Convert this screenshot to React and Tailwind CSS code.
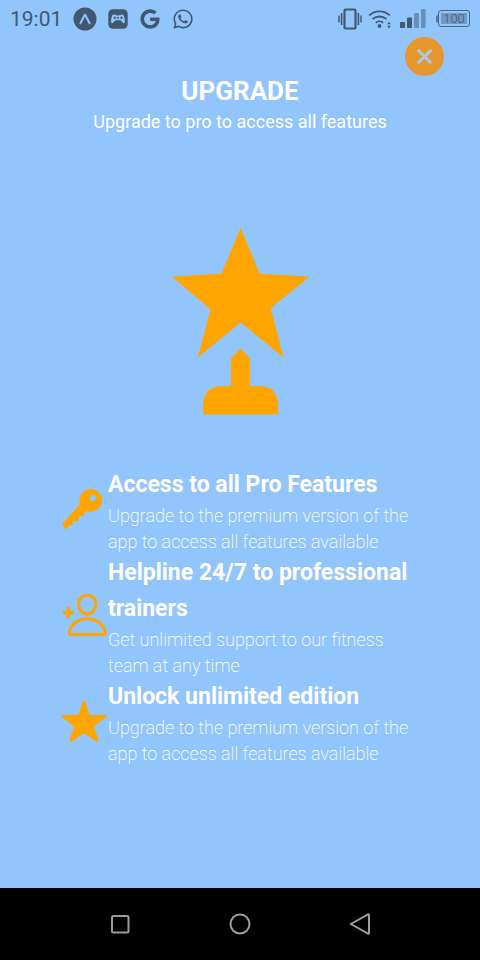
import { FaGoogle, FaWhatsapp } from "react-icons/fa";

function KeyIcon({ className }) {
  return (
    <svg viewBox="0 0 48 48" className={className} fill="currentColor" aria-hidden="true">
      <path
        fillRule="evenodd"
        d="M30.700 3a11.400 11.400 0 1 1-3.500 22.300q-1.800-.3-2.700 1.100c.2 2.600-1.200 4-3.200 3.500-1.600-.3-2.300.3-2.500 1.300.5 2.800-1.200 4.600-3.400 4.100-1.300-.4-1.900-1-2.400-.4-.6.900.3 1.800-.3 3-.6 1.500-2.100 1.900-3.400 1.700-1 .1-1 1.500-1.900 2.300-1.200 1.200-2.400 1.100-3.500.2L3.300 39.800q-1.300-1.300-.2-2.700L19.200 19q.8-1 .5-2.600A11.300 11.300 0 0 1 30.700 3zM33 9a3.100 3.100 0 1 0 .01 0z"
      />
    </svg>
  );
}

function PersonAddIcon({ className }) {
  return (
    <svg
      viewBox="0 0 48 48"
      className={className}
      fill="none"
      stroke="currentColor"
      strokeWidth="3"
      strokeLinejoin="round"
      aria-hidden="true"
    >
      <path d="M27.200 3.200c5.200 0 9 3.800 8.700 9-.4 5.500-4 9.800-8.700 9.800s-8.300-4.300-8.700-9.800c-.3-5.200 3.500-9 8.700-9z" />
      <path d="M27.200 26.700c8.800 0 16.700 5.300 18 14 .2 1.200-.4 1.900-1.500 1.900H10.700c-1.100 0-1.700-.7-1.500-1.900 1.300-8.700 9.200-14 18-14z" />
      <path d="M8.400 15v11.200M3 20.600h10.800" strokeWidth="3.300" />
    </svg>
  );
}

function StarIcon({ className }) {
  return (
    <svg
      viewBox="0 0 48 48"
      className={className}
      fill="currentColor"
      stroke="currentColor"
      strokeWidth="2.600"
      strokeLinejoin="round"
      aria-hidden="true"
    >
      <path d="M24 4 28.700 18.300H45.300L32.400 28 37.300 42.700 24 33.800 10.700 42.700 15.600 28 2.700 18.300H19.300z" />
    </svg>
  );
}

const features = [
  {
    Icon: KeyIcon,
    title: "Access to all Pro Features",
    text: "Upgrade to the premium version of the app to access all features available",
  },
  {
    Icon: PersonAddIcon,
    title: "Helpline 24/7 to professional trainers",
    text: "Get unlimited support to our fitness team at any time",
  },
  {
    Icon: StarIcon,
    title: "Unlock unlimited edition",
    text: "Upgrade to the premium version of the app to access all features available",
  },
];

function ExpoIcon() {
  return (
    <svg viewBox="0 0 24 24" className="size-6" aria-hidden="true">
      <circle cx="12" cy="12" r="11.5" fill="currentColor" />
      <path
        d="M7.400 16.200C9 13.600 10.300 10.500 12 7.600c1.700 2.900 3 6 4.600 8.600"
        fill="none"
        stroke="#93c5fd"
        strokeWidth="2"
        strokeLinecap="round"
        strokeLinejoin="round"
      />
    </svg>
  );
}

function GamepadIcon() {
  return (
    <svg viewBox="0 0 20 20" className="size-5" aria-hidden="true">
      <rect x="0.3" y="0.3" width="19.400" height="19.400" rx="4.500" fill="currentColor" />
      <path
        d="M5.200 5.600c1.600-.6 2.600.8 4.800.8s3.200-1.400 4.800-.8c1.400.6 2.200 4.600 2 7.400-.1 1.500-1.300 1.600-2.200.6-.9-1-1.500-2.400-2.600-2.400H8c-1.100 0-1.700 1.400-2.600 2.400-.9 1-2.100.9-2.200-.6-.2-2.800.6-6.800 2-7.400z"
        fill="#93c5fd"
      />
      <path d="M6.800 7.300v3M5.300 8.800h3M12 8.800h3M13.500 7.300v3M9 8l2 1.500M11 8 9 9.500" stroke="currentColor" strokeWidth="0.9" />
    </svg>
  );
}

function VibrateIcon() {
  return (
    <svg viewBox="0 0 24 22" className="h-[22px] w-6" fill="none" stroke="currentColor" aria-hidden="true">
      <rect x="6.500" y="1.500" width="11" height="19" rx="1" strokeWidth="2.200" />
      <path d="M3.600 5v12M20.400 5v12" strokeWidth="1.600" />
      <path d="M1 7.500v7M23 7.500v7" strokeWidth="1.400" />
    </svg>
  );
}

function WifiIcon() {
  return (
    <svg viewBox="0 0 24 20" className="h-5 w-6" fill="none" stroke="currentColor" aria-hidden="true">
      <path d="M1.200 6.400a15 15 0 0 1 20.600 0M4.500 10.200a10.400 10.400 0 0 1 14 0M7.800 13.700a5.600 5.600 0 0 1 7.400 0" strokeWidth="1.800" />
      <circle cx="11.500" cy="17" r="1.900" fill="currentColor" stroke="none" />
      <path d="M19.200 15.300h3.600L21 12.700zM19.200 16.800h3.600L21 19.400z" fill="currentColor" stroke="none" />
    </svg>
  );
}

function SignalIcon() {
  return (
    <svg viewBox="0 0 26 20" className="h-5 w-[26px]" fill="currentColor" aria-hidden="true">
      <rect x="0" y="13" width="5" height="6" rx="0.800" />
      <rect x="7" y="8.500" width="5" height="10.500" rx="0.800" />
      <rect x="14" y="4" width="5" height="15" rx="0.800" opacity="0.5" />
      <rect x="21" y="0" width="4.600" height="19" rx="0.800" opacity="0.5" />
    </svg>
  );
}

function StatusBar() {
  return (
    <div className="flex h-9 items-center justify-between px-[10px] pt-px text-[#41586f]">
      <div className="flex items-center gap-[11px]">
        <span className="text-[21px] leading-6">19:01</span>
        <ExpoIcon />
        <GamepadIcon />
        <FaGoogle className="ml-px size-5" aria-hidden="true" />
        <FaWhatsapp className="ml-px size-[22px]" aria-hidden="true" />
      </div>
      <div className="flex items-center gap-2">
        <div className="flex items-center gap-[6px]">
          <VibrateIcon />
          <WifiIcon />
        </div>
        <SignalIcon />
        <div className="ml-[2px] flex items-center">
          <span className="h-2 w-[2px] rounded-l bg-[#5c7a9b]" />
          <span className="flex h-[17px] w-8 items-center justify-center rounded-[3px] border border-[#4c6681] p-[2px]">
            <span className="flex h-full w-full items-center justify-center bg-[#739ac7] text-[13px] leading-none font-light">
              100
            </span>
          </span>
        </div>
      </div>
    </div>
  );
}

function Trophy() {
  return (
    <svg viewBox="171 228 139 187" className="mt-[90px] h-[187px] w-[139px]" fill="#ffa500" aria-hidden="true">
      <path d="M240.500 228 259.800 273.500 309.500 276.700 270.800 308.300 283.500 357.500 240.500 322.500 197.800 357.500 210.500 309.300 172 276.700 221.700 273.500z" />
      <path d="M240.500 348.800 250 358.300V386h10.500q17.500 1 17.500 19.500V413.500q0 1-1 1H204.200q-1 0-1-1V405.500Q203.200 387 221 386H231V358.300z" />
    </svg>
  );
}

function NavBar() {
  return (
    <nav className="grid h-[72px] grid-cols-3 place-items-center bg-black px-[60px] text-[#9c9c9c]">
      <button type="button" aria-label="Recent apps">
        <svg viewBox="0 0 24 24" className="size-6" fill="none" stroke="currentColor" strokeWidth="2">
          <rect x="4" y="4" width="16.500" height="16.500" rx="1.500" />
        </svg>
      </button>
      <button type="button" aria-label="Home">
        <svg viewBox="0 0 24 24" className="size-6" fill="none" stroke="currentColor" strokeWidth="2">
          <circle cx="12" cy="12" r="9.500" />
        </svg>
      </button>
      <button type="button" aria-label="Back">
        <svg viewBox="0 0 24 24" className="size-6" fill="none" stroke="currentColor" strokeWidth="2" strokeLinejoin="round">
          <path d="M2.800 12 20 2.400q1-.4 1 .6V21q0 1-1 .6z" />
        </svg>
      </button>
    </nav>
  );
}

export default function App() {
  return (
    <div className="flex min-h-screen flex-col bg-[#93c5fd] font-[Roboto,sans-serif]">
      <StatusBar />
      <main className="flex grow flex-col items-center pb-8 text-white">
        <button
          type="button"
          aria-label="Close"
          className="mt-px mr-9 flex size-[39px] items-center justify-center self-end rounded-full bg-[#e6982f] text-[#a9c9ea]"
        >
          <svg viewBox="0 0 18 18" className="size-[17px]" fill="none" stroke="currentColor" strokeWidth="3.200">
            <path d="M1.800 1.800 16.200 16.200M16.200 1.800 1.800 16.200" />
          </svg>
        </button>
        <h1 className="text-[26px] leading-[30px] font-bold">UPGRADE</h1>
        <p className="text-lg leading-8">Upgrade to pro to access all features</p>
        <Trophy />
        <ul className="mt-[52px] w-full px-[60px]">
          {features.map(({ Icon, title, text }) => (
            <li key={title} className="flex items-center">
              <Icon className="mb-[2px] size-12 shrink-0 text-[#ffa500]" />
              <div className="grow">
                <h2 className="text-[23px] leading-9 font-bold">{title}</h2>
                <p className="text-lg leading-[26px] font-extralight">{text}</p>
              </div>
            </li>
          ))}
        </ul>
      </main>
      <NavBar />
    </div>
  );
}
